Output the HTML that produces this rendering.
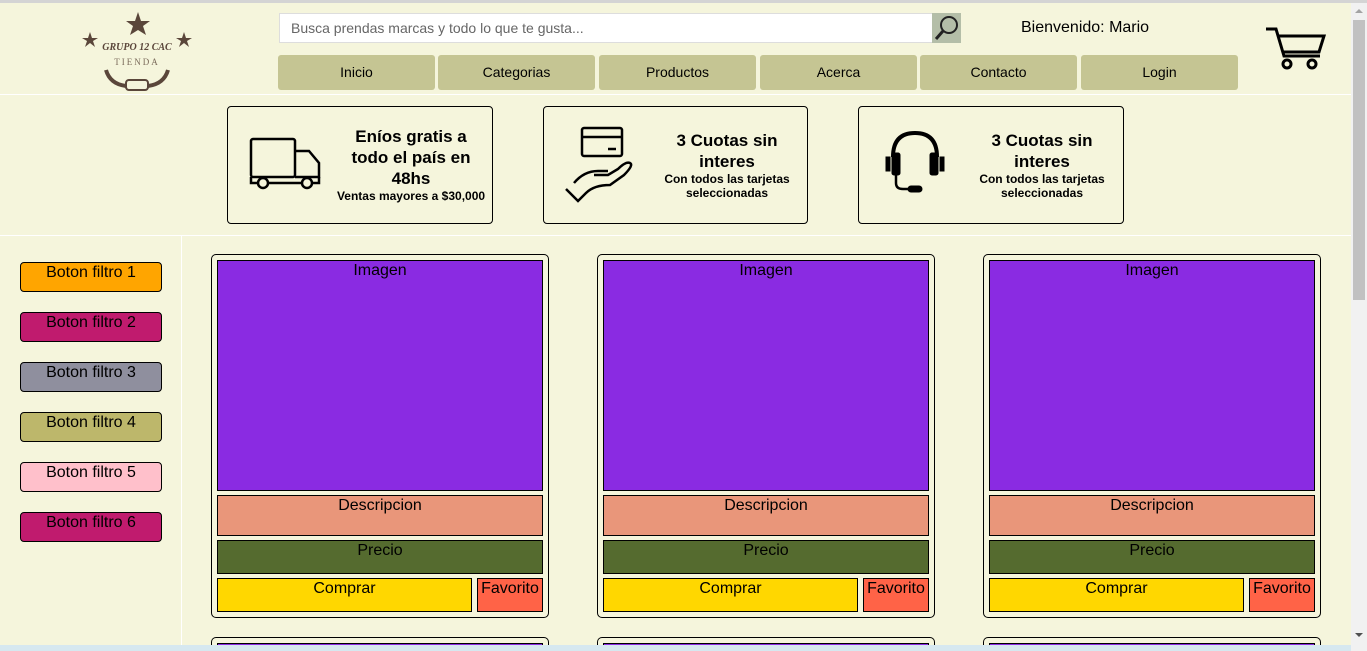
<!DOCTYPE html>
<html style="height:651px;overflow:hidden"><head><meta charset="utf-8"><style>
*{box-sizing:border-box;margin:0;padding:0}
body{width:1367px;height:651px;overflow:hidden;background:#f5f5dc;font-family:"Liberation Sans",sans-serif;position:relative}
#w{position:absolute;left:0;top:0;width:1367px;height:651px;overflow:hidden}
.a{position:absolute}
.nav{position:absolute;top:55px;height:35px;width:157px;background:#c5c593;border-radius:3px;font-size:14px;text-align:center;line-height:35px;color:#000}
.box{position:absolute;top:106px;height:118px;border:1px solid #000;border-radius:4px}
.f{position:absolute;left:20px;width:142px;height:30px;border:1px solid #000;border-radius:4px;font-size:16px;text-align:center;line-height:18px;padding-top:1px}
.card{position:absolute;width:338px;height:364px;border:1px solid #000;border-radius:5px}
.card div{position:absolute;border:1px solid #000;text-align:center;font-size:16px;line-height:18px;padding-top:1px;color:#000}
.card2{position:absolute;width:338px;height:14px;border:1px solid #000;border-bottom:none;border-radius:5px 5px 0 0;overflow:hidden}
.card2 div{position:absolute;left:5px;top:5px;width:326px;height:20px;border:1px solid #000;background:#8a2be2}
</style></head><body><div id="w">
<div class="a" style="left:0;top:0;width:1367px;height:3px;background:#d4d4d4"></div>
<svg class="a" style="left:78px;top:10px" width="118" height="82" viewBox="0 0 118 82">
<g fill="#5a463a">
<polygon points="60,2 63,11 72,11 65,16 68,25 60,20 52,25 55,16 48,11 57,11"/>
<polygon points="12,22 14,28 20,28 15,31 17,37 12,33 7,37 9,31 4,28 10,28"/>
<polygon points="106,22 108,28 114,28 109,31 111,37 106,33 101,37 103,31 98,28 104,28"/>
</g>
<text x="59" y="40" font-family="Liberation Serif" font-style="italic" font-weight="bold" font-size="10" fill="#5a463a" text-anchor="middle">GRUPO 12 CAC</text>
<text x="59" y="55" font-family="Liberation Serif" font-size="9" fill="#7a6a5a" text-anchor="middle" letter-spacing="2">TIENDA</text>
<path d="M28 60 Q32 74 48 76 M90 60 Q86 74 70 76" stroke="#5a463a" stroke-width="4" fill="none"/>
<rect x="48" y="70" width="22" height="10" rx="3" fill="none" stroke="#5a463a" stroke-width="2"/>
</svg>
<div class="a" style="left:279px;top:13px;width:654px;height:30px;background:#fff;border:1px solid #ddd;font-size:14px;color:#666;line-height:28px;padding-left:11px">Busca prendas marcas y todo lo que te gusta...</div>
<div class="a" style="left:932px;top:13px;width:29px;height:30px;background:#b4bea8"></div>
<svg class="a" style="left:932px;top:13px" width="29" height="30"><circle cx="17" cy="12" r="8" fill="none" stroke="#222" stroke-width="2"/><line x1="11" y1="18" x2="4" y2="26" stroke="#222" stroke-width="3"/></svg>
<div class="a" style="left:1021px;top:19px;font-size:16px">Bienvenido: Mario</div>
<svg class="a" style="left:1264px;top:26px" width="62" height="46"><path d="M2 3 H12 L20 30 H56 M14 10 H60 L55 26 H19" fill="none" stroke="#000" stroke-width="3"/><circle cx="23" cy="38" r="4" fill="none" stroke="#000" stroke-width="3"/><circle cx="48" cy="38" r="4" fill="none" stroke="#000" stroke-width="3"/></svg>
<div class="nav" style="left:278px">Inicio</div>
<div class="nav" style="left:438px">Categorias</div>
<div class="nav" style="left:599px">Productos</div>
<div class="nav" style="left:760px">Acerca</div>
<div class="nav" style="left:920px">Contacto</div>
<div class="nav" style="left:1081px">Login</div>
<div class="a" style="left:0;top:94px;width:1351px;height:1px;background:#fff"></div>
<div class="box" style="left:227px;width:266px">
<svg class="a" style="left:21px;top:30px" width="74" height="54"><g fill="none" stroke="#000" stroke-width="2.5"><rect x="2" y="2" width="44" height="38" rx="2"/><path d="M46 14 H60 L70 26 V40 H46"/><path d="M2 40 V46 H70 V40"/><circle cx="14" cy="46" r="5" fill="#f5f5dc"/><circle cx="58" cy="46" r="5" fill="#f5f5dc"/></g></svg>
<div class="a" style="left:108px;top:19px;width:150px;text-align:center;font-weight:bold;font-size:17px;line-height:21px">Eníos gratis a todo el país en 48hs<div style="font-size:12px;line-height:14px">Ventas mayores a $30,000</div></div>
</div>
<div class="box" style="left:543px;width:265px">
<svg class="a" style="left:20px;top:18px" width="74" height="80"><g fill="none" stroke="#000" stroke-width="2.5"><rect x="18" y="3" width="40" height="28" rx="2"/><line x1="18" y1="12" x2="58" y2="12"/><line x1="44" y1="24" x2="52" y2="24"/><path d="M2 64 L14 76 L22 68 Q30 60 46 60 L60 50 Q70 40 66 38 Q62 36 54 44 L44 50 H30"/><path d="M10 58 Q20 46 34 46 H44"/></g></svg>
<div class="a" style="left:108px;top:23px;width:150px;text-align:center;font-weight:bold;font-size:17px;line-height:21px">3 Cuotas sin interes<div style="font-size:12px;line-height:14px">Con todos las tarjetas seleccionadas</div></div>
</div>
<div class="box" style="left:858px;width:266px">
<svg class="a" style="left:24px;top:22px" width="64" height="70"><g fill="none" stroke="#000"><path d="M10 28 Q10 4 32 4 Q54 4 54 28" stroke-width="4"/><rect x="9" y="24" width="8" height="22" rx="2" fill="#000"/><rect x="47" y="24" width="8" height="22" rx="2" fill="#000"/><rect x="3" y="28" width="4" height="14" fill="#000"/><rect x="57" y="28" width="4" height="14" fill="#000"/><path d="M13 46 V54 Q13 60 20 60 H26" stroke-width="2.5"/><rect x="25" y="57" width="14" height="6" rx="3" fill="#000"/></g></svg>
<div class="a" style="left:108px;top:23px;width:150px;text-align:center;font-weight:bold;font-size:17px;line-height:21px">3 Cuotas sin interes<div style="font-size:12px;line-height:14px">Con todos las tarjetas seleccionadas</div></div>
</div>
<div class="a" style="left:0;top:235px;width:1351px;height:1px;background:#fff"></div>
<div class="a" style="left:181px;top:236px;width:1px;height:409px;background:#fff"></div>
<div class="f" style="top:262px;background:#ffa500">Boton filtro 1</div>
<div class="f" style="top:312px;background:#c01b6e">Boton filtro 2</div>
<div class="f" style="top:362px;background:#8f8f9e">Boton filtro 3</div>
<div class="f" style="top:412px;background:#bdb76b">Boton filtro 4</div>
<div class="f" style="top:462px;background:#ffc0cb">Boton filtro 5</div>
<div class="f" style="top:512px;background:#c01b6e">Boton filtro 6</div>
<div class="card" style="left:211px;top:254px"><div style="left:5px;top:5px;width:326px;height:231px;background:#8a2be2">Imagen</div><div style="left:5px;top:240px;width:326px;height:41px;background:#e9967a">Descripcion</div><div style="left:5px;top:285px;width:326px;height:34px;background:#556b2f">Precio</div><div style="left:5px;top:323px;width:255px;height:34px;background:#ffd700">Comprar</div><div style="left:265px;top:323px;width:66px;height:34px;background:#ff6347">Favorito</div></div>
<div class="card" style="left:597px;top:254px"><div style="left:5px;top:5px;width:326px;height:231px;background:#8a2be2">Imagen</div><div style="left:5px;top:240px;width:326px;height:41px;background:#e9967a">Descripcion</div><div style="left:5px;top:285px;width:326px;height:34px;background:#556b2f">Precio</div><div style="left:5px;top:323px;width:255px;height:34px;background:#ffd700">Comprar</div><div style="left:265px;top:323px;width:66px;height:34px;background:#ff6347">Favorito</div></div>
<div class="card" style="left:983px;top:254px"><div style="left:5px;top:5px;width:326px;height:231px;background:#8a2be2">Imagen</div><div style="left:5px;top:240px;width:326px;height:41px;background:#e9967a">Descripcion</div><div style="left:5px;top:285px;width:326px;height:34px;background:#556b2f">Precio</div><div style="left:5px;top:323px;width:255px;height:34px;background:#ffd700">Comprar</div><div style="left:265px;top:323px;width:66px;height:34px;background:#ff6347">Favorito</div></div>
<div class="card2" style="left:211px;top:637px"><div></div></div>
<div class="card2" style="left:597px;top:637px"><div></div></div>
<div class="card2" style="left:983px;top:637px"><div></div></div>
<div class="a" style="left:0;top:645px;width:1351px;height:6px;background:#d6e8f0"></div>
<div class="a" style="left:1351px;top:3px;width:16px;height:648px;background:#f1f1f1"></div>
<div class="a" style="left:1353px;top:20px;width:12px;height:280px;background:#c1c1c1"></div>
<div class="a" style="left:1355px;top:9px;width:0;height:0;border-left:4px solid transparent;border-right:4px solid transparent;border-bottom:4px solid #a3a3a3"></div>
<div class="a" style="left:1355px;top:633px;width:0;height:0;border-left:4px solid transparent;border-right:4px solid transparent;border-top:4px solid #505050"></div>
</div></body></html>
